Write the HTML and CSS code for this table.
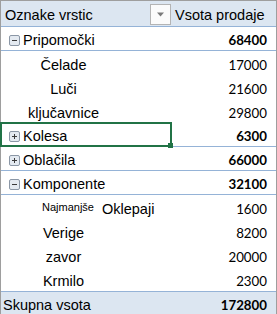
FILE: index.html
```html
<!DOCTYPE html>
<html>
<head>
<meta charset="utf-8">
<link rel="stylesheet" href="styles.css">
</head>
<body>
<div class="pivot">
  <div class="row head">
    <div class="lbl">Oznake vrstic<span class="filter-btn"><svg width="9" height="5" viewBox="0 0 9 5"><path d="M1 0.5h7L4.5 4.5z" fill="#7a7a7a"/></svg></span></div>
    <div class="val head-val">Vsota prodaje</div>
  </div>
  <div class="row group">
    <div class="lbl"><svg class="tog" width="11" height="11" viewBox="0 0 11 11"><rect x="0.5" y="0.5" width="10" height="10" rx="1.5" fill="#e4eaf1" stroke="#8b97a6"/><path d="M3 5.5h5" stroke="#3a3a3a"/></svg>Pripomočki</div>
    <div class="val">68400</div>
  </div>
  <div class="row item"><div class="lbl"><span class="name">Čelade</span></div><div class="val">17000</div></div>
  <div class="row item"><div class="lbl"><span class="name">Luči</span></div><div class="val">21600</div></div>
  <div class="row item"><div class="lbl"><span class="name">ključavnice</span></div><div class="val">29800</div></div>
  <div class="row group selected">
    <div class="lbl"><svg class="tog" width="11" height="11" viewBox="0 0 11 11"><rect x="0.5" y="0.5" width="10" height="10" rx="1.5" fill="#e4eaf1" stroke="#8b97a6"/><path d="M3 5.5h5M5.5 3v5" stroke="#3a3a3a"/></svg>Kolesa</div>
    <div class="val">6300</div>
    <span class="sel"></span><span class="handle"></span>
  </div>
  <div class="row group">
    <div class="lbl"><svg class="tog" width="11" height="11" viewBox="0 0 11 11"><rect x="0.5" y="0.5" width="10" height="10" rx="1.5" fill="#e4eaf1" stroke="#8b97a6"/><path d="M3 5.5h5M5.5 3v5" stroke="#3a3a3a"/></svg>Oblačila</div>
    <div class="val">66000</div>
  </div>
  <div class="row group">
    <div class="lbl"><svg class="tog" width="11" height="11" viewBox="0 0 11 11"><rect x="0.5" y="0.5" width="10" height="10" rx="1.5" fill="#e4eaf1" stroke="#8b97a6"/><path d="M3 5.5h5" stroke="#3a3a3a"/></svg>Komponente</div>
    <div class="val">32100</div>
  </div>
  <div class="row item"><div class="lbl lbl-left"><span class="small">Najmanjše</span><span>Oklepaji</span></div><div class="val">1600</div></div>
  <div class="row item"><div class="lbl"><span class="name">Verige</span></div><div class="val">8200</div></div>
  <div class="row item"><div class="lbl"><span class="name">zavor</span></div><div class="val">20000</div></div>
  <div class="row item"><div class="lbl"><span class="name">Krmilo</span></div><div class="val">2300</div></div>
  <div class="row total">
    <div class="lbl">Skupna vsota</div>
    <div class="val">172800</div>
  </div>
</div>
</body>
</html>
```

FILE: styles.css
```css
html, body {
  margin: 0;
  padding: 0;
  background: #ffffff;
}

.pivot {
  width: 277px;
  box-sizing: border-box;
  border: 1px solid #9e9e9e;
  font-family: "Liberation Sans", Arial, sans-serif;
  font-size: 14.5px;
  color: #000;
}

.row {
  position: relative;
  display: grid;
  grid-template-columns: 170px 1fr;
  height: 24px;
  box-sizing: border-box;
}

.lbl, .val {
  display: flex;
  align-items: flex-end;
  padding-bottom: 1px;
  line-height: 17px;
  white-space: nowrap;
}

.val {
  justify-content: flex-end;
  padding-right: 9px;
  font-family: Lato, "Liberation Sans", sans-serif;
  font-size: 13.3px;
}

.head {
  height: 26px;
  background: #dce6f1;
  border-bottom: 1px solid #95b3d7;
}

.head .lbl {
  padding-left: 4px;
  position: relative;
  padding-bottom: 2px;
}

.head .head-val {
  justify-content: flex-start;
  padding-left: 4px;
  padding-bottom: 2px;
  font-family: "Liberation Sans", Arial, sans-serif;
  font-size: 14.5px;
}

.filter-btn {
  position: absolute;
  right: 0;
  top: 3px;
  width: 21px;
  height: 21px;
  box-sizing: border-box;
  border: 1px solid #b4b4b4;
  background: #fbfbfb;
  display: flex;
  align-items: center;
  justify-content: center;
}

.group {
  border-bottom: 1px solid #95b3d7;
}

.group .lbl {
  padding-left: 8px;
}

.group .val {
  font-weight: 700;
}

.tog {
  flex: none;
  margin-right: 3px;
  margin-bottom: 3px;
}

.item .lbl {
  width: 125px;
  justify-content: center;
}

.item .lbl.lbl-left {
  width: auto;
  justify-content: flex-start;
  padding-left: 41px;
}

.small {
  font-size: 11px;
  margin-right: 8px;
  position: relative;
  top: -2px;
}

.total {
  background: #dce6f1;
  border-top: 1px solid #95b3d7;
}

.total .lbl {
  padding-left: 2px;
}

.total .val {
  font-weight: 700;
}

.sel {
  position: absolute;
  left: -1px;
  top: -1px;
  width: 172px;
  height: 25px;
  box-sizing: border-box;
  border: 2px solid #217346;
}

.handle {
  position: absolute;
  left: 167px;
  top: 20px;
  width: 5px;
  height: 5px;
  background: #217346;
}
```
